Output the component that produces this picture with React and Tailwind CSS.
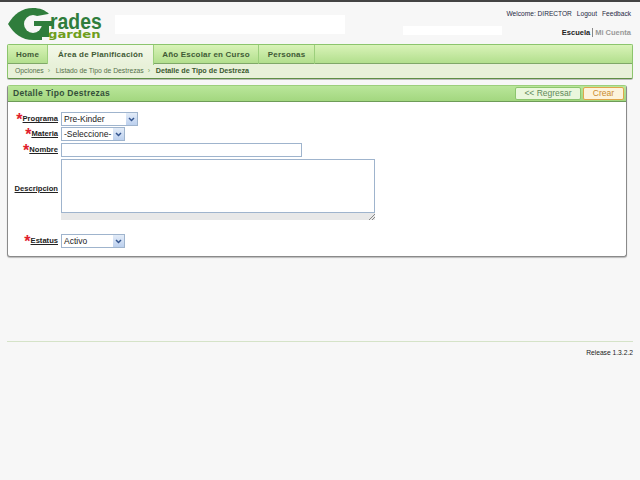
const Logo = () => (
  <div className="relative w-[96px] h-[32px] shrink-0">
    <svg width="46" height="32" viewBox="0 0 46 32" className="absolute left-0 top-0">
      <path d="M0 16 C6 6 14 0 25 0 C32 0 37 2 41 6 L41 32 L25 32 C14 32 6 26 0 16 Z" fill="#2f7d3c" />
      <circle cx="25" cy="16" r="9" fill="#f7f7f7" />
      <path d="M29 8 L46 5 L46 13 L29 13 Z" fill="#f7f7f7" />
      <path d="M34 26 L46 26 L46 32 L34 32 Z" fill="#f7f7f7" />
      <path d="M26 13 L46 13 L46 18 L41 18 L41 29 L34 29 L34 18 L26 18 Z" fill="#2f7d3c" />
    </svg>
    <span className="absolute left-[42px] top-[6px] text-[22px] leading-[16px] font-bold text-[#2f7d3c] [transform:scaleX(0.88)] origin-left">
      rades
    </span>
    <span className="absolute left-[40px] top-[23px] text-[11px] leading-[8px] font-bold text-[#6f9e1c] font-['DejaVu_Sans',sans-serif] [transform:scaleX(1.2)] origin-left">
      garden
    </span>
  </div>
);

const Tab = ({ label, active, pad }) => (
  <div
    className={
      active
        ? "h-[20px] -mb-px flex items-center border-r border-[#9ccf7c] bg-gradient-to-b from-[#f4f9ea] to-[#e8f1d9] " + pad
        : "h-[19px] flex items-center border-r border-[#9ccf7c] " + pad
    }
  >
    <span className="text-[8px] font-bold tracking-[0.2px] text-[#3f5a35] whitespace-nowrap">
      {label}
    </span>
  </div>
);

const Crumb = ({ children, bold }) => (
  <span className={bold ? "font-bold text-[7.2px] text-[#3c5a30]" : "text-[6.8px] text-[#55704a]"}>{children}</span>
);

const Label = ({ children, required, className }) => (
  <div className={"w-[50px] flex justify-end items-center shrink-0 whitespace-nowrap " + (className || "")}>
    {required && <span className="text-[16px] leading-[10px] font-bold text-[#e0202c] h-[8px]">*</span>}
    <span className="text-[7.6px] font-bold underline text-[#222]">{children}</span>
  </div>
);

const Select = ({ value, width }) => (
  <div className={"h-[14px] border border-[#9fb4cd] bg-white flex items-center justify-between " + width}>
    <span className="pl-[2px] text-[8.5px] leading-[12px] text-[#222] whitespace-nowrap">{value}</span>
    <span className="w-[11px] h-[12px] shrink-0 bg-gradient-to-b from-[#e3ecf8] to-[#bcd0ee] flex items-center justify-center">
      <svg width="7" height="5" viewBox="0 0 7 5">
        <path d="M1 1 L3.5 3.5 L6 1" fill="none" stroke="#34558f" strokeWidth="1.5" />
      </svg>
    </span>
  </div>
);

export default function App() {
  return (
    <div className="w-[640px] h-[480px] overflow-hidden bg-[#f7f7f7] border-t-2 border-[#444] font-['Liberation_Sans',Arial,sans-serif]">
      {/* header */}
      <div className="h-[42px] pl-[8px] pr-[9px] pt-[6px] flex relative">
        <Logo />
        <div className="w-[230px] h-[19px] ml-[11px] mt-[7px] bg-white" />
        <div className="w-[99px] h-[9px] ml-[58px] mt-[18px] bg-white" />
        <div className="flex-1 flex flex-col items-end pt-[1px]">
          <div className="text-[6.6px] leading-[10px] text-[#1f2a44] whitespace-nowrap flex gap-[5px]">
            <span>Welcome: DIRECTOR</span>
            <span>Logout</span>
            <span>Feedback</span>
          </div>
          <div className="mt-[8px] text-[7.5px] leading-[11px] whitespace-nowrap flex items-center">
            <span className="font-bold text-[#222]">Escuela</span>
            <span className="mx-[2px] w-px h-[9px] bg-[#888]" />
            <span className="font-bold text-[#999]">Mi Cuenta</span>
          </div>
        </div>
      </div>

      {/* nav */}
      <div className="mx-[7px] h-[35px] border border-[#8cc56d] border-b-[#5f8f45] rounded-[2px] bg-[#e8f1d9] shadow-[0_1px_0_#bbb]">
        <div className="h-[19px] flex bg-gradient-to-b from-[#d9f3b8] to-[#b2df8d] border-b border-[#7fa868]">
          <Tab label="Home" pad="px-[8px]" />
          <Tab label="Área de Planificación" active pad="px-[10px]" />
          <Tab label="Año Escolar en Curso" pad="px-[8px]" />
          <Tab label="Personas" pad="px-[9px]" />
        </div>
        <div className="h-[14px] pl-[7px] flex items-center gap-[4px] whitespace-nowrap">
          <Crumb>Opciones</Crumb>
          <span className="text-[7px] w-[4px] text-[#7fa868]">›</span>
          <Crumb>Listado de Tipo de Destrezas</Crumb>
          <span className="text-[7px] w-[4px] text-[#7fa868]">›</span>
          <Crumb bold>Detalle de Tipo de Destreza</Crumb>
        </div>
      </div>

      {/* panel */}
      <div className="ml-[7px] mt-[6px] w-[620px] h-[172px] border border-[#8a8a8a] border-t-[#9ccf7c] rounded-[3px] bg-white shadow-[0_1px_1px_#bbb]">
        <div className="h-[16px] flex items-center justify-between bg-gradient-to-b from-[#b9e69a] to-[#a3d77f] border-b border-[#6e9c58] pl-[5px] pr-[2px]">
          <span className="text-[8.5px] font-bold tracking-[0.3px] text-[#34503a]">
            Detalle Tipo Destrezas
          </span>
          <div className="flex gap-[2px]">
            <button className="w-[66px] h-[13px] rounded-[2px] border border-[#8cc56d] bg-[#eaf7dc] text-[8.5px] leading-[11px] text-[#5f8a5a]">
              {"<< Regresar"}
            </button>
            <button className="w-[41px] h-[13px] rounded-[2px] border border-[#e0a64a] bg-[#fdf3dc] text-[8.5px] leading-[11px] text-[#c98a2e]">
              Crear
            </button>
          </div>
        </div>
        <div className="pt-[10px] flex flex-col">
          <div className="flex items-center gap-[3px] h-[14px]">
            <Label required>Programa</Label>
            <Select value="Pre-Kinder" width="w-[77px]" />
          </div>
          <div className="flex items-center gap-[3px] h-[14px] mt-[1px]">
            <Label required>Materia</Label>
            <Select value="-Seleccione-" width="w-[64px]" />
          </div>
          <div className="flex items-center gap-[3px] h-[14px] mt-[2px]">
            <Label required>Nombre</Label>
            <div className="w-[241px] h-[14px] border border-[#9fb4cd] bg-white" />
          </div>
          <div className="flex items-start gap-[3px] mt-[2px]">
            <Label className="mt-[24px]">Descripcion</Label>
            <div className="w-[314px]">
              <div className="h-[54px] border border-[#9fb4cd] bg-white" />
              <div className="h-[7px] bg-[#e8e8e8] flex justify-end items-end">
                <svg width="6" height="6" viewBox="0 0 6 6">
                  <path d="M0 6 L6 0 M3 6 L6 3" stroke="#888" strokeWidth="1" />
                </svg>
              </div>
            </div>
          </div>
          <div className="flex items-center gap-[3px] h-[14px] mt-[14px]">
            <Label required>Estatus</Label>
            <Select value="Activo" width="w-[64px]" />
          </div>
        </div>
      </div>

      {/* footer */}
      <div className="mx-[7px] mt-[84px] border-t border-[#d5e3c8] pt-[6px] flex justify-end">
        <span className="text-[6.7px] leading-[10px] text-[#222]">Release 1.3.2.2</span>
      </div>
    </div>
  );
}
